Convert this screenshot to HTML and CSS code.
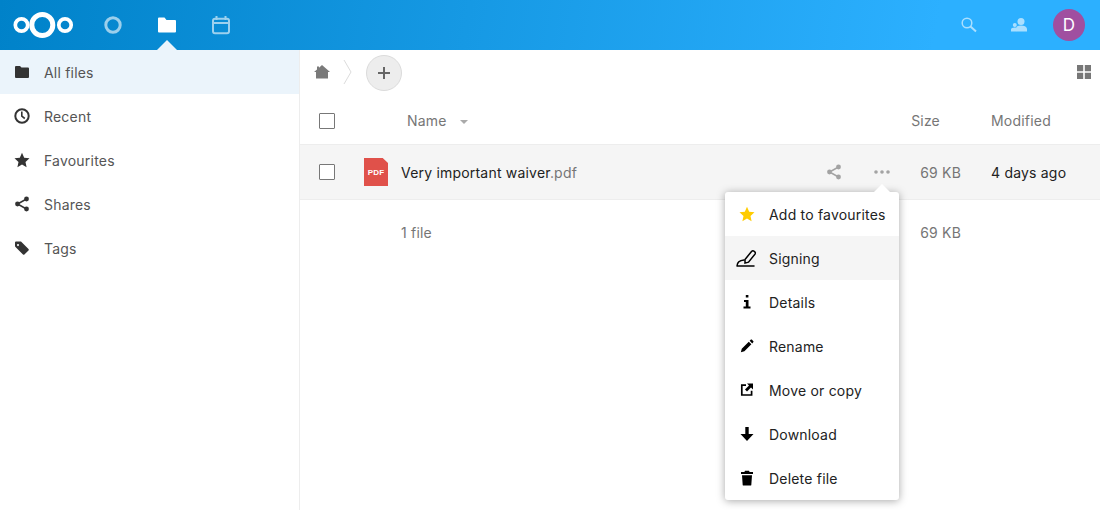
FILE: index.html
```html
<!DOCTYPE html>
<html lang="en">
<head>
    <meta charset="UTF-8">
    <title>Files</title>
    <link rel="stylesheet" href="styles.css">
</head>
<body>

<header class="topbar">
    <svg class="logo" width="62" height="30" viewBox="0 0 62 30">
        <g fill="none" stroke="#fff">
            <circle cx="30.300" cy="15" r="10.500" stroke-width="5"/>
            <circle cx="9.500" cy="15" r="6.200" stroke-width="3.700"/>
            <circle cx="53" cy="15" r="6.200" stroke-width="3.700"/>
        </g>
    </svg>
    <nav class="apps">
        <a class="app dim">
            <svg width="18" height="18" viewBox="0 0 18 18"><circle cx="9" cy="9" r="7.200" fill="none" stroke="#fff" stroke-width="3"/></svg>
        </a>
        <a class="app active">
            <svg width="20" height="18" viewBox="0 0 20 18"><path d="M1 2.500q0-1 1-1h5.500l2 2.500h8.500q1 0 1 1v10.500q0 1-1 1h-16q-1 0-1-1z" fill="#fff"/></svg>
        </a>
        <a class="app dim">
            <svg width="20" height="20" viewBox="0 0 20 20"><g fill="none" stroke="#fff" stroke-width="2"><rect x="2" y="3.800" width="16" height="14.400" rx="2"/><path d="M2 8h16M5.500 1v4M14.500 1v4"/></g></svg>
        </a>
    </nav>
    <div class="top-right">
        <svg class="dim" width="16" height="16" viewBox="0 0 16 16"><g fill="none" stroke="#fff"><circle cx="6" cy="6" r="4.800" stroke-width="1.500"/><path d="M9.500 9.500l5.500 5" stroke-width="2"/></g></svg>
        <svg class="dim" width="16" height="16" viewBox="0 0 16 16"><g fill="#fff"><circle cx="10" cy="4.500" r="3.500"/><path d="M5 11.500q0-3 5-3t6 3v3h-11z"/><circle cx="3.800" cy="8" r="2"/><path d="M0 14.500v-2q0-2 3.800-2t1.200 4z"/></g></svg>
        <div class="avatar">D</div>
    </div>
</header>

<div class="main">
    <aside class="sidebar">
        <a class="nav-item selected">
            <svg width="14" height="12" viewBox="0 0 14 12"><path d="M0 1q0-1 1-1h4l1.500 1.500h6.500q1 0 1 1v8.500q0 1-1 1h-12q-1 0-1-1z" fill="#333"/></svg>
            All files
        </a>
        <a class="nav-item">
            <svg width="16" height="16" viewBox="0 0 16 16"><g fill="none" stroke="#333"><circle cx="8" cy="8" r="6.700" stroke-width="2"/><path d="M7.800 3.500v4.700l3 2.300" stroke-width="1.600"/></g></svg>
            Recent
        </a>
        <a class="nav-item">
            <svg width="16" height="16" viewBox="0 0 16 16"><path d="M8 .8l2.200 4.900 5.300.6-4 3.600 1.100 5.300-4.600-2.700-4.600 2.700 1.100-5.300-4-3.600 5.300-.6z" fill="#333"/></svg>
            Favourites
        </a>
        <a class="nav-item">
            <svg width="16" height="16" viewBox="0 0 16 16"><g fill="#333"><circle cx="12.500" cy="3" r="2.400"/><circle cx="12.500" cy="13" r="2.400"/><circle cx="3.500" cy="8" r="2.400"/></g><path d="M12.500 3l-9 5 9 5" fill="none" stroke="#333" stroke-width="1.500"/></svg>
            Shares
        </a>
        <a class="nav-item">
            <svg width="16" height="16" viewBox="0 0 16 16"><path d="M1 2.500q0-1 1-1h5l7.500 7.500q.7.700 0 1.400l-4.100 4.100q-.7.700-1.400 0l-7.500-7.500q-.5-.5-.5-1zM4 4a1 1 0 1 0 .01 0z" fill="#333" fill-rule="evenodd"/></svg>
            Tags
        </a>
    </aside>

    <section class="content">
        <div class="crumbs">
            <svg class="home" width="16" height="16" viewBox="0 0 16 16"><path d="M8 1l8 7h-2v6.500h-12v-6.500h-2l3-2.600v-3h2v1.300z" fill="#7a7a7a"/></svg>
            <svg class="chevron" width="9" height="26" viewBox="0 0 9 26"><path d="M1 1l7 12-7 12" fill="none" stroke="#dcdcdc"/></svg>
            <button class="add">
                <svg width="14" height="14" viewBox="0 0 14 14"><path d="M7 1v12M1 7h12" stroke="#666" stroke-width="2"/></svg>
            </button>
            <svg class="grid-toggle" width="14" height="14" viewBox="0 0 14 14"><path d="M0 0h6.200v6.200h-6.200zM7.800 0h6.200v6.200h-6.200zM0 7.800h6.200v6.200h-6.200zM7.800 7.800h6.200v6.200h-6.200z" fill="#777"/></svg>
        </div>

        <div class="row head">
            <span class="check"></span>
            <span class="col-name">Name <i class="sort"></i></span>
            <span class="col-size">Size</span>
            <span class="col-date">Modified</span>
        </div>

        <div class="row file">
            <span class="check"></span>
            <div class="pdf">PDF</div>
            <span class="file-name">Very important waiver<span class="ext">.pdf</span></span>
            <svg class="share" width="16" height="16" viewBox="0 0 16 16"><g fill="#a3a3a3"><circle cx="12.500" cy="3" r="2.400"/><circle cx="12.500" cy="13" r="2.400"/><circle cx="3.500" cy="8" r="2.400"/></g><path d="M12.500 3l-9 5 9 5" fill="none" stroke="#a3a3a3" stroke-width="1.500"/></svg>
            <svg class="more" width="16" height="4" viewBox="0 0 16 4"><g fill="#a3a3a3"><circle cx="2" cy="2" r="1.800"/><circle cx="8" cy="2" r="1.800"/><circle cx="14" cy="2" r="1.800"/></g></svg>
            <span class="col-size">69 KB</span>
            <span class="col-date dark">4 days ago</span>
        </div>

        <div class="row summary">
            <span class="count">1 file</span>
            <span class="col-size">69 KB</span>
            <span class="col-date"></span>
        </div>

        <ul class="menu">
            <li>
                <svg width="16" height="16" viewBox="0 0 16 16"><path d="M8 .8l2.200 4.900 5.300.6-4 3.600 1.100 5.300-4.600-2.700-4.600 2.700 1.100-5.300-4-3.600 5.300-.6z" fill="#fc0"/></svg>
                Add to favourites
            </li>
            <li class="hover">
                <svg width="21" height="18" viewBox="0 0 21 18"><g fill="none" stroke="#000" stroke-width="1.500"><path d="M9 10.500l6.500-8q1.200-1.200 2.800-.2t.7 2.800l-6.500 8-3.500 1z"/><path d="M1 17q.2-5.500 7-6M1 17h17" stroke-linecap="round"/></g></svg>
                Signing
            </li>
            <li>
                <svg width="16" height="16" viewBox="0 0 16 16"><path d="M6.800 1h2.600v2.600h-2.600zM5 6h4.500v6.500h2v2h-7v-2h2.300v-4.500h-1.800z" fill="#000"/></svg>
                Details
            </li>
            <li>
                <svg class="small" width="14" height="14" viewBox="0 0 16 16"><path d="M1 15l1-4 8-8 3 3-8 8zM11 2l1.500-1.300q.5-.4 1 0l1.800 1.800q.4.500 0 1l-1.300 1.500z" fill="#000"/></svg>
                Rename
            </li>
            <li>
                <svg width="16" height="16" viewBox="0 0 16 16"><path d="M7 3.200h-4.200v9.800h9.800v-4.200" fill="none" stroke="#000" stroke-width="1.700"/><path d="M8 1.500h6v6l-2-2-4 4-2-2 4-4z" fill="#000"/></svg>
                Move or copy
            </li>
            <li>
                <svg width="16" height="16" viewBox="0 0 16 16"><path d="M6.300 1h3.400v7h4.800l-6.500 7-6.500-7h4.800z" fill="#000"/></svg>
                Download
            </li>
            <li>
                <svg width="16" height="16" viewBox="0 0 16 16"><path d="M6 .8h4l.6 1.200h3.400v2h-12v-2h3.400zM3 5.200h10l-.7 9.800q-.1 .6-.8 .6h-7q-.7 0-.8-.6z" fill="#000"/></svg>
                Delete file
            </li>
        </ul>
    </section>
</div>

</body>
</html>
```

FILE: styles.css
```css
* {
    box-sizing: border-box;
}

body {
    font-family: Inter, 'Noto Sans', sans-serif;
    font-size: 14px;
    letter-spacing: 0.2px;
    color: #222;
    background: #fff;
    margin: 0;
    height: 510px;
    overflow: hidden;
}

/* Header */
.topbar {
    height: 50px;
    display: flex;
    align-items: center;
    background: linear-gradient(100deg, #0082c9, #2cb0ff 85%);
    padding-left: 12px;
}

.apps {
    display: flex;
    margin-left: 12px;
}

.app {
    position: relative;
    width: 54px;
    height: 50px;
    display: flex;
    align-items: center;
    justify-content: center;
}

.dim {
    opacity: 0.6;
}

.app.active::after {
    content: "";
    position: absolute;
    left: 17px;
    bottom: 0;
    border: 10px solid transparent;
    border-top: 0;
    border-bottom-color: #ebf4fb;
}

.top-right {
    margin-left: auto;
    display: flex;
    align-items: center;
    gap: 34px;
    padding-right: 15px;
}

.avatar {
    width: 32px;
    height: 32px;
    margin-left: -8px;
    border-radius: 50%;
    background: #a04fa0;
    color: #fff;
    font-size: 17px;
    display: flex;
    align-items: center;
    justify-content: center;
}

/* Layout */
.main {
    display: flex;
    height: 460px;
}

.sidebar {
    width: 300px;
    flex-shrink: 0;
    border-right: 1px solid #ededed;
}

.nav-item {
    height: 44px;
    display: flex;
    align-items: center;
    gap: 14px;
    padding-left: 14px;
    color: #555;
}

.nav-item.selected {
    background: #ebf4fb;
}

.nav-item.selected svg {
    margin: 0 1px;
}

.content {
    position: relative;
    flex: 1;
}

/* Breadcrumbs */
.crumbs {
    height: 44px;
    display: flex;
    align-items: center;
    padding: 0 9px 0 14px;
}

.chevron {
    margin-left: 13px;
}

.add {
    width: 36px;
    height: 36px;
    margin: 2px 0 0 14px;
    padding: 0;
    border: 1px solid #dbdbdb;
    border-radius: 50%;
    background: #ededed;
    display: flex;
    align-items: center;
    justify-content: center;
}

.grid-toggle {
    margin-left: auto;
}

/* File list */
.row {
    display: flex;
    align-items: center;
}

.head {
    height: 51px;
    padding-top: 3px;
    color: #767676;
    border-bottom: 1px solid #ededed;
}

.check {
    width: 16px;
    height: 16px;
    margin-left: 19px;
    border: 1px solid #777;
    border-radius: 1px;
    background: #fff;
    flex-shrink: 0;
}

.col-name {
    margin-left: 72px;
    margin-right: auto;
}

.sort {
    display: inline-block;
    margin-left: 9px;
    vertical-align: middle;
    border: 4px solid transparent;
    border-bottom: 0;
    border-top-color: #aaa;
}

.col-size {
    width: 50px;
    color: #767676;
    text-align: right;
}

.head .col-size {
    width: 40px;
    margin-right: 51px;
}

.col-date {
    width: 139px;
    padding-left: 30px;
    white-space: nowrap;
    color: #767676;
}

.head .col-date {
    width: 109px;
    padding-left: 0;
}

.col-date.dark {
    color: #222;
}

.file {
    height: 55px;
    background: #f5f5f5;
    border-bottom: 1px solid #ededed;
}

.pdf {
    width: 24px;
    height: 28px;
    margin-left: 29px;
    background: #e0514a;
    clip-path: polygon(0 0, 78% 0, 100% 18%, 100% 100%, 0 100%);
    color: #fff;
    font-family: 'Liberation Sans', sans-serif;
    font-size: 8px;
    font-weight: bold;
    text-align: center;
    line-height: 30px;
}

.file-name {
    margin-left: 13px;
    margin-right: auto;
}

.ext {
    color: #767676;
}

.share {
    margin-right: 32px;
}

.more {
    margin-right: 21px;
}

.summary {
    height: 64px;
}

.count {
    margin-left: 101px;
    margin-right: auto;
    color: #767676;
}

/* Actions menu */
.menu {
    position: absolute;
    top: 142px;
    left: 425px;
    width: 174px;
    margin: 0;
    padding: 0;
    list-style: none;
    background: #fff;
    border-radius: 3px;
    box-shadow: 0 1px 8px rgba(0, 0, 0, 0.35);
}

.menu::before {
    content: "";
    position: absolute;
    top: -8px;
    right: 9px;
    border: 8px solid transparent;
    border-top: 0;
    border-bottom-color: #fff;
}

.menu li {
    height: 44px;
    display: flex;
    align-items: center;
    color: #222;
    padding-left: 44px;
    position: relative;
}

.menu li svg {
    position: absolute;
    left: 14px;
    top: 14px;
}

.menu li svg.small {
    left: 15px;
    top: 15px;
}

.menu li.hover {
    background: #f5f5f5;
}

.menu li.hover svg {
    left: 11px;
    top: 13px;
}
```
